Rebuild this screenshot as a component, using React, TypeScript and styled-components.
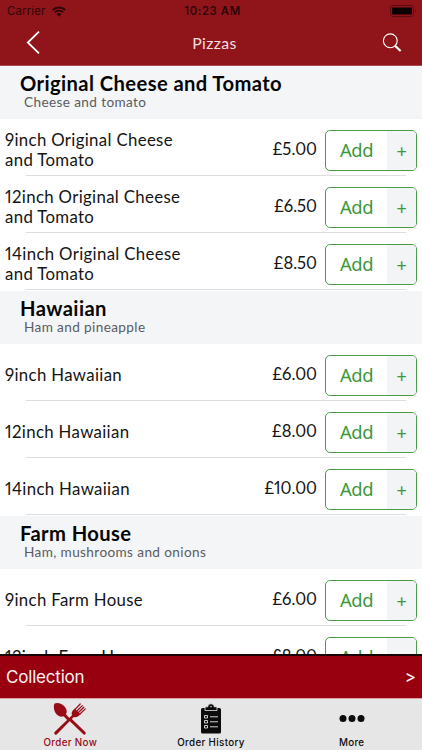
import React from "react";
import styled, { createGlobalStyle } from "styled-components";

const GlobalStyle = createGlobalStyle`
  * { box-sizing: border-box; }
  body { margin: 0; background: #fff; font-family: Lato, "Open Sans", sans-serif; font-variant-numeric: proportional-nums; }
  button { font: inherit; border: 0; padding: 0; background: none; }
`;

const Screen = styled.div`
  width: 422px;
  height: 750px;
  display: flex;
  flex-direction: column;
  overflow: hidden;
  background: #fff;
`;

const Header = styled.header`
  flex: none;
  height: 66px;
  background: #90151b;
  border-bottom: 1px solid #a9484e;
`;

const StatusBar = styled.div`
  height: 20px;
  display: grid;
  grid-template-columns: 1fr auto 1fr;
  align-items: center;
  padding: 2px 5px 0 7px;
  font: 11.3px Inter, sans-serif;
  color: #2c0508;
`;

const Carrier = styled.div`
  display: flex;
  align-items: center;
  gap: 6px;
  letter-spacing: 0.22px;
`;

const Clock = styled.div`
  margin-left: 1px;
  font-weight: 600;
  letter-spacing: 0.62px;
`;

const BatterySlot = styled.div`
  display: flex;
  justify-content: flex-end;
`;

const NavBar = styled.div`
  height: 45px;
  display: grid;
  grid-template-columns: 1fr auto 1fr;
  align-items: center;
  padding: 0 20px 0 26px;
  color: #fff;
`;

const NavTitle = styled.h1`
  margin: 0 6px 1px 7px;
  font-size: 15.8px;
  font-weight: 400;
  letter-spacing: 0.4px;
  color: #f5dfe0;
`;

const NavButton = styled.button<{ $end?: boolean }>`
  display: flex;
  color: #fff;
  justify-self: ${(p) => (p.$end ? "end" : "start")};
`;

const Menu = styled.main`
  flex: none;
  height: 588px;
  overflow: hidden;
`;

const Section = styled.section`
  padding-bottom: 1px;
`;

const SectionHeader = styled.div`
  height: 53px;
  padding: 5px 0 0 20px;
  background: #f3f5f7;
`;

const SectionTitle = styled.h2`
  margin: 0;
  font-size: 20.2px;
  line-height: 25px;
  font-weight: 700;
  letter-spacing: 0.4px;
  color: #050505;
  white-space: nowrap;
`;

const SectionNote = styled.p`
  margin: 0 0 0 4px;
  font-size: 13.6px;
  line-height: 13px;
  letter-spacing: 0.38px;
  color: #5b5c5e;
`;

const Row = styled.div`
  height: 57px;
  display: flex;
  align-items: center;
  padding: 5px 5px 0 5px;
  background: linear-gradient(#dedee0, #dedee0) 26px 100% / 380px 1px no-repeat;
`;

const ItemName = styled.div`
  width: 185px;
  font-size: 16.8px;
  line-height: 20.5px;
  letter-spacing: 0.34px;
  color: #141414;
`;

const Price = styled.div`
  margin-left: auto;
  margin-right: 8px;
  padding-bottom: 2px;
  font-size: 16.6px;
  letter-spacing: 0;
  color: #141414;
`;

const AddButton = styled.button`
  width: 92px;
  height: 41px;
  display: grid;
  grid-template-columns: 61px 1fr;
  border: 1px solid #4a9c49;
  border-radius: 5px;
  overflow: hidden;
  color: #3d983b;
  background: #fff;
`;

const AddLabel = styled.span`
  display: flex;
  align-items: center;
  justify-content: center;
  padding-bottom: 1px;
  font: 18.4px "Noto Sans", sans-serif;
  letter-spacing: -0.4px;
`;

const PlusLabel = styled(AddLabel)`
  padding: 1px 0 0;
  font-size: 18px;
  background: #f2f4f6;
`;

const CollectionBar = styled.button`
  flex: none;
  height: 45px;
  display: flex;
  align-items: center;
  justify-content: space-between;
  padding: 0 6px 0 6px;
  background: #98000f;
  border-top: 2px solid #180306;
  border-bottom: 1px solid #d9a0a6;
  color: #fff1f2;
  font: 17px Inter, sans-serif;
`;

const CollectionLabel = styled.span`
  letter-spacing: -0.2px;
`;

const TabBar = styled.nav`
  flex: 1;
  display: grid;
  grid-template-columns: repeat(3, 1fr);
  background: #e6e6e6;
`;

const Tab = styled.button<{ $active?: boolean }>`
  display: flex;
  flex-direction: column;
  align-items: center;
  color: ${(p) => (p.$active ? "#980c18" : "#0c0c0c")};
`;

const TabIcon = styled.span`
  height: 37px;
  padding-top: 3px;
  display: flex;
  align-items: center;
`;

const TabLabel = styled.span`
  font: 500 9.8px/13px Inter, sans-serif;
  letter-spacing: 0.34px;
`;

const WifiIcon = () => (
  <svg width="14" height="11" viewBox="0 0 14 11" fill="none" stroke="currentColor" strokeWidth="1.9">
    <path d="M.7 4A9 9 0 0 1 13.3 4M2.9 6.3a5.8 5.8 0 0 1 8.2 0" />
    <path d="M7 10.7 4.7 8.2a3.3 3.3 0 0 1 4.6 0z" fill="currentColor" stroke="none" />
  </svg>
);

const BatteryIcon = () => (
  <svg width="27" height="12" viewBox="0 0 27 12">
    <rect x=".5" y=".5" width="23" height="11" rx="2.6" fill="none" stroke="#5c0b10" />
    <rect x="2" y="2.500" width="20" height="7" rx="1" fill="#0c0102" />
    <path d="M25 4q1.6 2 0 4z" fill="#5c0b10" />
  </svg>
);

const BackIcon = () => (
  <svg width="14" height="23" viewBox="0 0 14 23" fill="none" stroke="currentColor" strokeWidth="1.8">
    <path d="M13 .7 1.8 11.5 13 22.3" />
  </svg>
);

const SearchIcon = () => (
  <svg width="20" height="20" viewBox="0 0 20 20" fill="none" stroke="currentColor">
    <circle cx="8.300" cy="7.800" r="6.9" strokeWidth="1.1" />
    <path d="m13 12.700 5.6 5.300" strokeWidth="2.200" />
  </svg>
);

const CutleryIcon = () => (
  <svg width="34" height="34" viewBox="0 0 34 34" fill="currentColor">
    <path d="M1.6 1.6C4.5.2 9.2 1.5 12 5c2.2 2.9 2 5.5 1 7.3l3.7 4.1-2 2-4.1-4.1c-2.1 1-4.9.4-7.1-2C.9 9.3.1 4.3 1.6 1.6z" />
    <path d="m18.3 16.6 14 13.4q1 1.2 0 2.2t-2.2-.1L15.8 18.2z" />
    <path d="M1.6 30 19 13.300c-.9-2.500.1-4.300 1.700-5.800l1-.9 5.700 5.700-.9 1c-1.700 1.700-3.900 2.400-5.700 1.700L3.900 32.200q-1.200 1-2.200 0T1.600 30z" />
    <path d="m21.900 7.600 5.300-5.600M23.700 9.200l5.600-5.600M25.200 10.700l5.600-5.500M26.700 12.200l5.600-5.300" fill="none" stroke="currentColor" strokeWidth="1.250" strokeLinecap="round" />
  </svg>
);

const ClipboardIcon = () => (
  <svg width="22" height="32" viewBox="0 0 22 32">
    <path d="M2.500 5h17q1.500 0 1.500 1.500V29q0 1.500-1.500 1.500h-17Q1 30.500 1 29V6.500Q1 5 2.500 5z" fill="#0b0b0b" />
    <path d="M5 7.500V4.600q0-.8 1-.8h1.800C8 2 9.200.8 11 .8s3 1.200 3.200 3H16q1 0 1 .8v2.900z" fill="#0b0b0b" stroke="#e6e6e6" strokeWidth=".8" />
    <circle cx="11" cy="3.600" r=".8" fill="#c6c6c6" />
    <g fill="none" stroke="#d0d0d0">
      <path d="M4.500 12.500h3v2.500h-3zM4.500 17.500h3V20h-3zM4.500 22.500h3V25h-3z" />
      <path d="M10 13.800h8M10 18.800h8M10 23.800h8" />
    </g>
  </svg>
);

const MoreIcon = () => (
  <svg width="26" height="8" viewBox="0 0 26 8" fill="currentColor">
    <circle cx="4" cy="3.500" r="3.500" />
    <circle cx="13" cy="3.500" r="3.500" />
    <circle cx="22" cy="3.500" r="3.500" />
  </svg>
);

const sections = [
  {
    title: "Original Cheese and Tomato",
    note: "Cheese and tomato",
    items: [
      ["9inch Original Cheese and Tomato", "£5.00"],
      ["12inch Original Cheese and Tomato", "£6.50"],
      ["14inch Original Cheese and Tomato", "£8.50"],
    ],
  },
  {
    title: "Hawaiian",
    note: "Ham and pineapple",
    items: [
      ["9inch Hawaiian", "£6.00"],
      ["12inch Hawaiian", "£8.00"],
      ["14inch Hawaiian", "£10.00"],
    ],
  },
  {
    title: "Farm House",
    note: "Ham, mushrooms and onions",
    items: [
      ["9inch Farm House", "£6.00"],
      ["12inch Farm House", "£8.00"],
    ],
  },
];

export default function App() {
  return (
    <Screen>
      <GlobalStyle />
      <Header>
        <StatusBar>
          <Carrier>
            Carrier <WifiIcon />
          </Carrier>
          <Clock>10:23 AM</Clock>
          <BatterySlot>
            <BatteryIcon />
          </BatterySlot>
        </StatusBar>
        <NavBar>
          <NavButton aria-label="Back">
            <BackIcon />
          </NavButton>
          <NavTitle>Pizzas</NavTitle>
          <NavButton $end aria-label="Search">
            <SearchIcon />
          </NavButton>
        </NavBar>
      </Header>
      <Menu>
        {sections.map((section) => (
          <Section key={section.title}>
            <SectionHeader>
              <SectionTitle>{section.title}</SectionTitle>
              <SectionNote>{section.note}</SectionNote>
            </SectionHeader>
            {section.items.map(([name, price]) => (
              <Row key={name}>
                <ItemName>{name}</ItemName>
                <Price>{price}</Price>
                <AddButton>
                  <AddLabel>Add</AddLabel>
                  <PlusLabel>+</PlusLabel>
                </AddButton>
              </Row>
            ))}
          </Section>
        ))}
      </Menu>
      <CollectionBar>
        <CollectionLabel>Collection</CollectionLabel>
        <span>&gt;</span>
      </CollectionBar>
      <TabBar>
        <Tab $active>
          <TabIcon>
            <CutleryIcon />
          </TabIcon>
          <TabLabel>Order Now</TabLabel>
        </Tab>
        <Tab>
          <TabIcon>
            <ClipboardIcon />
          </TabIcon>
          <TabLabel>Order History</TabLabel>
        </Tab>
        <Tab>
          <TabIcon>
            <MoreIcon />
          </TabIcon>
          <TabLabel>More</TabLabel>
        </Tab>
      </TabBar>
    </Screen>
  );
}
